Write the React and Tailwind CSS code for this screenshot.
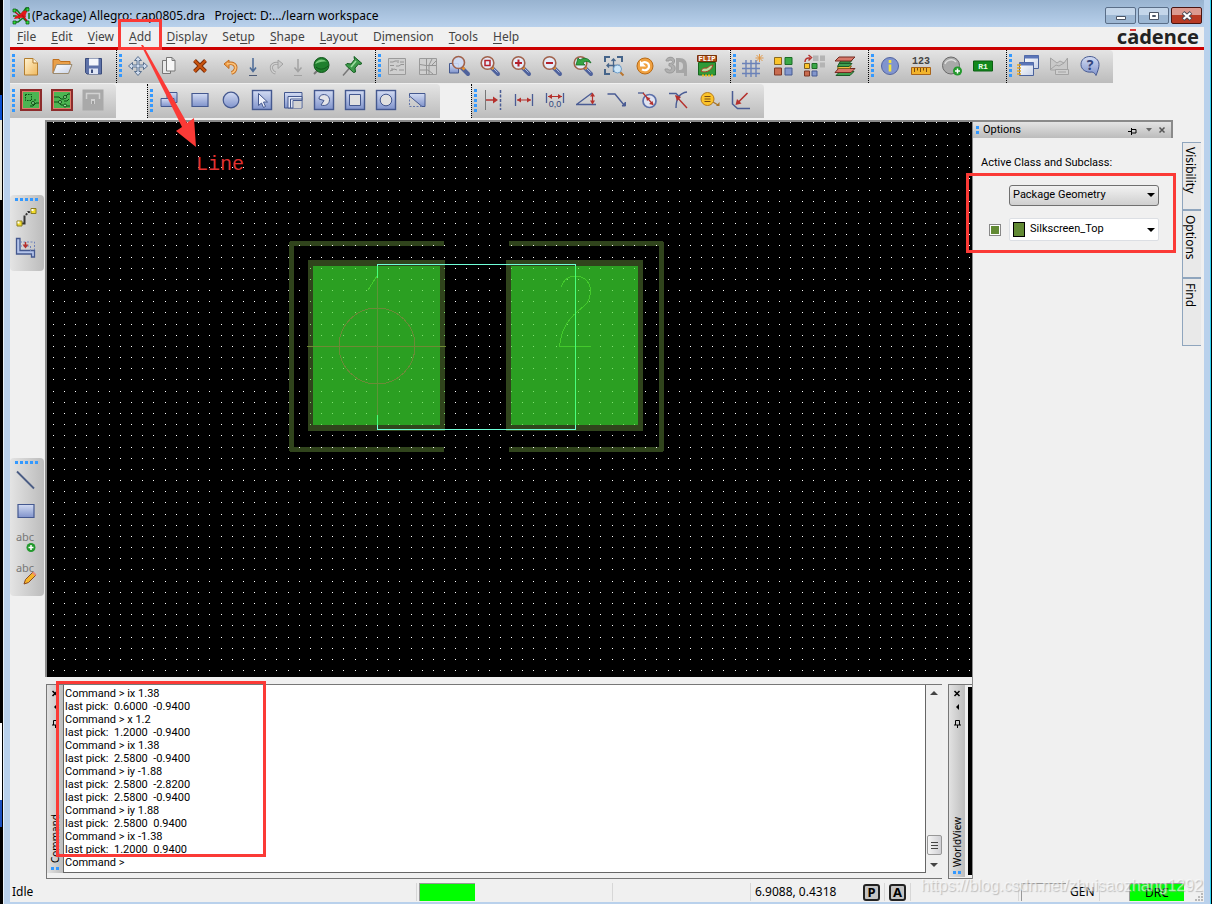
import { useState } from 'react';
import clsx from 'clsx';

const MENUS = [
  ['', 'F', 'ile'],
  ['', 'E', 'dit'],
  ['', 'V', 'iew'],
  ['', 'A', 'dd'],
  ['', 'D', 'isplay'],
  ['Set', 'u', 'p'],
  ['', 'S', 'hape'],
  ['', 'L', 'ayout'],
  ['D', 'i', 'mension'],
  ['', 'T', 'ools'],
  ['', 'H', 'elp'],
];

const LOG = [
  'Command > ix 1.38',
  'last pick:  0.6000  -0.9400',
  'Command > x 1.2',
  'last pick:  1.2000  -0.9400',
  'Command > ix 1.38',
  'last pick:  2.5800  -0.9400',
  'Command > iy -1.88',
  'last pick:  2.5800  -2.8200',
  'last pick:  2.5800  -0.9400',
  'Command > iy 1.88',
  'last pick:  2.5800  0.9400',
  'Command > ix -1.38',
  'last pick:  1.2000  0.9400',
];

// shared pieces of the toolbar icons
const lens = (
  <>
    <path d="M13 13l7 7" stroke="#4f629c" strokeWidth="4" strokeLinecap="round" />
    <path d="M14.500 13.500l5 5" stroke="#aebbe0" strokeWidth="1" />
    <path d="M13 12.500l2.500 2.500" stroke="#e8902c" strokeWidth="2.600" />
    <circle cx="9.500" cy="9" r="6.300" fill="#e6ebf8" stroke="#a0614a" strokeWidth="1.600" />
  </>
);

const frame = <rect x="2.500" y="2.500" width="19" height="19" fill="url(#blue)" stroke="#44588f" strokeWidth="1.400" />;

const ICONS = {
  new: (
    <>
      <path d="M5.500 4.500h8.500l4.500 4.500v12h-13z" fill="url(#cream)" stroke="#b27d2e" />
      <path d="M14 4.500v4.500h4.500" fill="#fff6df" stroke="#b27d2e" />
    </>
  ),
  open: (
    <>
      <path d="M3 19V5.500h6l1.500 2h9.500V11" fill="#e9a04a" stroke="#c06f1c" />
      <path d="M3 19.500l3.500-9h15.500l-3.500 9z" fill="url(#white)" stroke="#9a8a70" />
    </>
  ),
  save: (
    <>
      <path d="M4.500 4.500h16v15.500h-14.500l-1.500-1.500z" fill="#5e72a8" stroke="#3b4c7c" />
      <path d="M8 4.500h9.500v7H8z" fill="#f4f6fb" />
      <path d="M8 14.500h9v5.500H8z" fill="#dfe5f4" />
      <path d="M10 15.500h2v3.500h-2z" fill="#3b4c7c" />
    </>
  ),
  move: (
    <path
      d="M12 2.500l3.500 4h-2.500v4.500h4.500V8.500l4 3.500-4 3.500V13H13v4.500h2.500l-3.500 4-3.500-4H11V13H6.500v2.500l-4-3.500 4-3.500V11H11V6.500H8.500z"
      fill="#d4dff0"
      stroke="#4d6688"
      strokeWidth="0.900"
    />
  ),
  copy: (
    <>
      <path d="M5.500 6.500h8v13h-8z" fill="#e8e8e8" stroke="#777" />
      <path d="M9.500 3.500h5.500l3 3v10.500h-8.500z" fill="#f6f6f6" stroke="#777" />
      <path d="M15 3.500v3h3" fill="none" stroke="#777" />
    </>
  ),
  del: (
    <>
      <path d="M6.500 6.500l11 11M17.500 6.500l-11 11" stroke="#7a2c08" strokeWidth="4" />
      <path d="M6.500 6.500l11 11M17.500 6.500l-11 11" stroke="#c9540f" strokeWidth="2.200" />
    </>
  ),
  undo: (
    <>
      <path d="M8 10c6-2 9.500 1 8.500 5-.6 2-2 3.500-4 4" fill="none" stroke="#c06a1c" strokeWidth="3.500" />
      <path d="M10 6v8.500L5 10z" fill="#f0a14c" stroke="#c06a1c" />
      <path d="M8 10c6-2 9.500 1 8.500 5-.6 2-2 3.500-4 4" fill="none" stroke="#fbc27a" strokeWidth="1.800" />
    </>
  ),
  down: (
    <>
      <path d="M12 4v13M9 13.500l3 4 3-4" fill="none" stroke="#4b6a96" strokeWidth="1.500" />
      <path d="M8 21.500h8" stroke="#4b5a76" />
    </>
  ),
  redo: (
    <>
      <path d="M16 10c-6-2-9.500 1-8.500 5 .6 2 2 3.500 4 4" fill="none" stroke="#a2a2a2" strokeWidth="3" />
      <path d="M16 10c-6-2-9.500 1-8.500 5 .6 2 2 3.500 4 4" fill="none" stroke="#d0d0d0" strokeWidth="1.200" />
      <path d="M14 6v8.500L19 10z" fill="#c9c9c9" stroke="#a2a2a2" />
    </>
  ),
  downOff: (
    <>
      <path d="M12 5v12M8.500 13.500l3.500 4 3.500-4" fill="none" stroke="#a2a2a2" strokeWidth="1.500" />
      <path d="M8 21.500h8" stroke="#a2a2a2" />
    </>
  ),
  ball: (
    <>
      <path d="M5 20l4-4" stroke="#777" strokeWidth="2" />
      <circle cx="12.500" cy="11" r="7.500" fill="#1f7f2d" stroke="#0f5519" />
      <path d="M6 10c2-5 8-6 12-2-3-1-8 0-12 2z" fill="#7ac97d" />
      <path d="M7 13c3 3 8 3 12-1" fill="none" stroke="#0f5519" />
    </>
  ),
  pin: (
    <>
      <path d="M3 21.500l7-8" stroke="#777" strokeWidth="1.500" />
      <path d="M14 2.500l8 7-2 1-1.500-.5-3.500 4 .5 4-2 .5-8-7.500 1.500-1.500 4 .5 3.500-4.500z" fill="#3d9a4a" stroke="#115c1e" />
      <path d="M16 7l-5 6" stroke="#9edba0" strokeWidth="1.500" />
    </>
  ),
  ratsOff: (
    <>
      <path d="M3.500 4.500h17v16h-17z" fill="#cfcfcf" stroke="#9a9a9a" />
      <path d="M5 8h3l2-1h2M5 11.500h4M15 8h4M11 12h3l2-1.500h3M5 17l4-2 3 1M14 16h5M13 6v3M7 14v3" fill="none" stroke="#949494" />
    </>
  ),
  rats2Off: (
    <>
      <path d="M3.500 4.500h17v16h-17z" fill="#cfcfcf" stroke="#9a9a9a" />
      <path d="M10.500 5v15M16 5l-3 6v9M4 10.500l6 1h10M4 16h8l5 4M16 11l4-4" fill="none" stroke="#949494" />
    </>
  ),
  zoomWin: (
    <>
      <path d="M2.500 9.500h9v9.500h-9z" fill="url(#blue)" stroke="#44588f" />
      <path d="M15 14l6 6" stroke="#4f629c" strokeWidth="4" strokeLinecap="round" />
      <path d="M15 13l2.500 2.500" stroke="#e8902c" strokeWidth="2.600" />
      <circle cx="11.500" cy="8.500" r="6" fill="#cfdaf4" fillOpacity=".9" stroke="#a0614a" strokeWidth="1.600" />
    </>
  ),
  zoomFit: <>{lens}<path d="M7 6.500h5v5H7z" fill="none" stroke="#b5202c" strokeWidth="1.500" /></>,
  zoomIn: <>{lens}<path d="M9.500 5.500v7M6 9h7" stroke="#b5202c" strokeWidth="2" /></>,
  zoomOut: <>{lens}<path d="M6 9h7" stroke="#b5202c" strokeWidth="2" /></>,
  zoomPrev: (
    <>
      {lens}
      <path d="M5 11l2-7 2 2c4-3 9-2 11 3-3-2-6-2-8 0l2 2z" fill="#35a443" stroke="#146c22" strokeWidth=".8" />
    </>
  ),
  zoomCenter: (
    <>
      <path d="M3 8V3h5M15 3h5v5M3 15v5h5" fill="none" stroke="#45648a" strokeWidth="2" />
      <path d="M11.500 5v13M5 11.500h13M9.500 7l2-2 2 2M7 9.500l-2 2 2 2" fill="none" stroke="#45648a" strokeWidth="1.300" />
      <path d="M18 18l3.500 3.500" stroke="#b9752e" strokeWidth="2" />
      <circle cx="15.500" cy="15" r="4" fill="#cde6f8" stroke="#6c9cc8" />
    </>
  ),
  refresh: (
    <>
      <circle cx="12" cy="12" r="8" fill="#f0a140" stroke="#b86a16" />
      <path d="M8.500 9.500c3-2.500 7.500-1 7.500 2.800 0 3.500-4 5-7 3" fill="none" stroke="#fff" strokeWidth="2.200" />
      <path d="M7 6.500v6h6z" fill="#fff" />
    </>
  ),
  threeD: (
    <>
      <path d="M12 4h3c6 0 8 3 8 8v10h-3v-3h-8z" fill="#a6a6a6" />
      <path d="M2 7c0-5 9-5 8.500 0 0 2-1 3-2 3.500 4 1 4 9-3.500 8.500-3-.5-4-2-4-4h3c1 2 4 1 3.500-1S6 12 5 12V9.500c2 0 3.500-.5 3.500-2S5 5.500 5 7z" fill="#b0b0b0" stroke="#999" />
      <path d="M15 8v8c3 0 4-1 4-4s-1-4-4-4z" fill="#cdcdcd" />
    </>
  ),
  flip: (
    <>
      <path d="M2.500 1.500h19v6h-19z" fill="#b5541c" stroke="#7a3208" />
      <text x="12" y="7.200" fontSize="7" fontWeight="700" textAnchor="middle" fill="#fff" fontFamily="Liberation Mono, monospace">
        FLIP
      </text>
      <path d="M3.500 8.500h17v12.500h-17z" fill="#2f9a38" stroke="#17661f" />
      <path d="M6 17c3 2 10 1 12-6-4 0-5 4-8 3-2 0-3 1-4 3z" fill="#b8e0a0" stroke="#b03a26" />
      <path d="M7 21.500h11" stroke="#e8b820" strokeWidth="2" strokeDasharray="2 1" />
    </>
  ),
  grid: (
    <>
      <path d="M6 6v17M11 6v17M16 6v17M2 9.500h18M2 14.500h18M2 19.500h18" stroke="#6b82b8" strokeWidth="1.400" />
      <path d="M19.500 0v8M15.500 4h8M16.500 1l6 6M22.500 1l-6 6" stroke="#e0923a" strokeWidth=".9" />
    </>
  ),
  palette: (
    <>
      <path d="M3.500 3.500h7v7h-7z" fill="#fbc42a" stroke="#8a6a20" />
      <path d="M14 3.500h7v7h-7z" fill="#3aa946" stroke="#1c6b26" />
      <path d="M3.500 14h7v7h-7z" fill="#c96c50" stroke="#7c3624" />
      <path d="M14 14h7v7h-7z" fill="#8296cc" stroke="#475a92" />
    </>
  ),
  shadow: (
    <>
      <path d="M11 1.500h5.500v5.500H11zM18 1.500h5v5.500h-5zM18 8.500h5v5h-5z" fill="#b4b4b4" />
      <path d="M2.500 9.500h5v5h-5z" fill="#fbc42a" stroke="#7a5c20" />
      <path d="M10 9.500h5v5h-5z" fill="#3aa946" stroke="#1c6b26" />
      <path d="M2.500 17h5v5h-5z" fill="#c96c50" stroke="#7c3624" />
      <path d="M10 17h5v5h-5z" fill="#8296cc" stroke="#475a92" />
      <path d="M3 8c0-3 2-4.500 5-4M6.500 1l3 2.500-3 3" fill="none" stroke="#b5302c" strokeWidth="1.500" />
    </>
  ),
  layers: (
    <>
      <path d="M7 17.500h14l-4 4H3z" fill="#3fa050" stroke="#1c5a28" />
      <path d="M5.500 14.500h16.500l-4 4H2z" fill="#d8786a" stroke="#722a20" />
      <path d="M5.500 12h13l-2 2.500h-12z" fill="#f0c040" stroke="#86601a" />
      <path d="M6 9.500h13l-3 3H4.500z" fill="#3fa050" stroke="#1c5a28" />
      <path d="M8 6.500h11l-3 3H6z" fill="#2f8a40" stroke="#1c5a28" />
      <path d="M6 3h16l-4 4H2z" fill="#d8786a" stroke="#722a20" />
    </>
  ),
  info: (
    <>
      <circle cx="12" cy="12" r="8.500" fill="#8094cf" stroke="#5164a0" />
      <path d="M12 6v3M12 10.500v7" stroke="#f5e63c" strokeWidth="2.600" />
    </>
  ),
  ruler: (
    <>
      <text x="12" y="10" fontSize="10" fontWeight="700" textAnchor="middle" fill="#444" fontFamily="Liberation Mono, monospace">
        123
      </text>
      <path d="M2.500 13.500h19v7h-19z" fill="#f2b42c" stroke="#a8641a" />
      <path d="M5.500 14v4M8.500 14v2.500M11.500 14v4M14.500 14v2.500M17.500 14v4" stroke="#7a4a10" />
    </>
  ),
  datatip: (
    <>
      <circle cx="11" cy="11.500" r="8.500" fill="#a9a9a9" stroke="#6a6a6a" />
      <path d="M5 10c1-4 8-6 11-2" fill="none" stroke="#ddd" strokeWidth="1.500" />
      <circle cx="17.500" cy="17" r="4.500" fill="#23992d" />
      <path d="M17.500 14.500v5M15 17h5" stroke="#fff" strokeWidth="1.500" />
    </>
  ),
  r1: (
    <>
      <path d="M2.500 7h19v10h-19z" fill="#12891c" stroke="#0b5f12" />
      <text x="12" y="15" fontSize="8" fontWeight="700" textAnchor="middle" fill="#e7ffe7" fontFamily="Liberation Mono, monospace">
        R1
      </text>
    </>
  ),
  reports: (
    <>
      <path d="M8.500 1.500h14v13h-14z" fill="url(#white)" stroke="#4a629c" />
      <path d="M8.500 1.500h14v3h-14z" fill="#5b75b8" />
      <path d="M3.500 8.500h14v13h-14z" fill="url(#white)" stroke="#4a629c" />
      <path d="M3.500 8.500h14v3h-14z" fill="#5b75b8" />
      <path d="M1 11h4M1 14h4M1 17h4M1 20h4" stroke="#e3a51f" strokeWidth="1.500" />
    </>
  ),
  scriptOff: (
    <>
      <path d="M3.500 4v12h17V4l-3.500 5-4-2-3 2z" fill="#c9c9c9" stroke="#a3a3a3" />
      <path d="M4 15l5-4 3 1 5-3" fill="none" stroke="#a3a3a3" />
      <path d="M8.500 15.500h13v5h-13z" fill="#cfcfcf" stroke="#a3a3a3" />
      <path d="M11 18h8" stroke="#a3a3a3" />
    </>
  ),
  help: (
    <>
      <path d="M12 2.500c5 0 9 3.500 9 8 0 3-1 6-3 11-1-2-2-3-4-3.500-6 1-11-2.500-11-7.500s4-8 9-8z" fill="url(#blue)" stroke="#475a92" />
      <text x="12" y="15.500" fontSize="14" fontWeight="700" textAnchor="middle" fill="#33457c" fontFamily="Noto Sans, sans-serif">
        ?
      </text>
    </>
  ),
  board: (
    <>
      <rect x="2" y="2" width="20" height="20" fill="#4cb552" stroke="#8d2b2b" strokeWidth="2" />
      <rect x="3.500" y="3.500" width="17" height="17" stroke="#e07a6a" />
      <path d="M6.500 6.500h6v6h-6z" fill="none" stroke="#0c4f14" strokeDasharray="1.500 1" />
      <path d="M11 18h3l3-3h3M16 11v2" fill="none" stroke="#0c4f14" />
      <circle cx="14" cy="15" r="1.500" fill="#9fe09f" stroke="#0c4f14" />
    </>
  ),
  routes: (
    <>
      <rect x="2" y="2" width="20" height="20" fill="#4cb552" stroke="#8d2b2b" strokeWidth="2" />
      <rect x="3.500" y="3.500" width="17" height="17" stroke="#e07a6a" />
      <path d="M4 9h5l2 2h3M4 14h5l2 3h2M16 8l2-2h2M14 13h3l2-2M16 18h4" fill="none" stroke="#0c4f14" />
      <circle cx="15" cy="9" r="1.500" fill="#9fe09f" stroke="#0c4f14" />
      <circle cx="10" cy="14" r="1.500" fill="#9fe09f" stroke="#0c4f14" />
      <circle cx="15" cy="17.500" r="1.500" fill="#9fe09f" stroke="#0c4f14" />
    </>
  ),
  lockOff: (
    <>
      <path d="M1.500 1.500h21v21h-21z" fill="#a9a9a9" />
      <path d="M5.500 11V5.500h13V11" fill="none" stroke="#d2d2d2" strokeWidth="1.500" />
      <path d="M10 11h4v5h-4z" fill="#d2d2d2" />
      <path d="M12 13v3" stroke="#8a8a8a" strokeWidth="1.500" />
    </>
  ),
  shapeAdd: (
    <>
      <path d="M10 4.500h10v10h-10z" fill="url(#blue)" stroke="#44588f" />
      <path d="M4 10.500h13v8H4z" fill="url(#blue)" stroke="#44588f" />
    </>
  ),
  rect: <path d="M4 5.500h16v13H4z" fill="url(#blue)" stroke="#44588f" strokeWidth="1.200" />,
  circle: <circle cx="12" cy="12" r="7.800" fill="url(#blue)" stroke="#44588f" strokeWidth="1.200" />,
  select: <>{frame}<path d="M8.500 5.500v12l3-2.500 2 4.500 2-1-2-4.500h4z" fill="#f0f2fa" stroke="#44588f" /></>,
  lShape: (
    <>
      <path d="M3.500 4.500h17.500v15.500h-17.500z" fill="url(#blue)" stroke="#44588f" />
      <path d="M7 20V8.500h14v4h-9V20z" fill="#e4e9f6" stroke="#44588f" />
      <path d="M9.500 20v-9H21" stroke="#44588f" />
      <path d="M12.500 13h8v7h-8z" fill="#d2d2d2" />
    </>
  ),
  arcVoid: <>{frame}<path d="M7 11c0-6 10-6 10.500.5 0 5-4 7-8.500 5.500l3-4.500z" fill="#e4e4e8" stroke="#44588f" /></>,
  rectVoid: <>{frame}<path d="M6.500 6.500h11v11h-11z" fill="#e0e0e0" stroke="#44588f" /></>,
  circVoid: <>{frame}<circle cx="12" cy="12" r="5.800" fill="#e0e0e0" stroke="#44588f" /></>,
  island: (
    <>
      <path d="M4.500 5.500h15.500v13H17L4.500 8z" fill="url(#blue)" stroke="#44588f" />
      <path d="M4.500 8v10.500H17" fill="none" stroke="#6679ac" strokeDasharray="2 1.500" />
    </>
  ),
  dimDatum: (
    <>
      <path d="M4.500 2v20" stroke="#777" />
      <path d="M19.500 2v20" stroke="#4a5c94" strokeDasharray="3 1.500" strokeWidth="1.500" />
      <path d="M5 12h8" stroke="#b5302c" strokeWidth="1.500" />
      <path d="M12 8.500l5 3.500-5 3.500z" fill="#b5302c" />
    </>
  ),
  dimLinear: (
    <>
      <path d="M3.500 6v12M20.500 6v12" stroke="#4a5c94" strokeWidth="1.300" />
      <path d="M5 12h14" stroke="#b5302c" />
      <path d="M5 12l4-2.500v5zM19 12l-4-2.500v5z" fill="#b5302c" />
    </>
  ),
  dimOrd: (
    <>
      <path d="M3.500 5v10M20.500 5v10" stroke="#4a5c94" strokeWidth="1.300" />
      <path d="M5 8.500h14" stroke="#b5302c" />
      <path d="M5 8.500l4-2.500v5zM19 8.500L15 6v5z" fill="#b5302c" />
      <text x="12" y="19" fontSize="9" textAnchor="middle" fill="#33457c" fontFamily="Liberation Sans, sans-serif">
        0,0
      </text>
    </>
  ),
  dimAngle: (
    <>
      <path d="M2 16.500h20M2.500 16.500L18 5" fill="none" stroke="#4a5c94" strokeWidth="1.300" />
      <path d="M18.500 7v8" stroke="#b5302c" strokeWidth="1.200" />
      <path d="M16 8.500l2.500-4 2.500 4zM16 12.500l2.500 4 2.500-4z" fill="#b5302c" />
    </>
  ),
  leader: (
    <>
      <path d="M2.500 6H10l9 11" fill="none" stroke="#4a5c94" strokeWidth="1.400" />
      <path d="M17 18h3.500v-4z" fill="#4a5c94" stroke="#4a5c94" />
    </>
  ),
  dimDia: (
    <>
      <path d="M2 5h6" stroke="#4a5c94" strokeWidth="1.300" />
      <circle cx="13.500" cy="13" r="6.500" fill="#dfe4f2" stroke="#5c70aa" strokeWidth="1.700" />
      <path d="M7 5l10 11.500" stroke="#b5302c" strokeWidth="1.200" />
      <path d="M10 9l4.500 1-3.500 3zM17.500 17l-4.500-1 3.500-3z" fill="#b5302c" />
    </>
  ),
  dimRad: (
    <>
      <path d="M2 5.500h7l4 4M20 4c-7 1-11 6-11 16" fill="none" stroke="#4a5c94" strokeWidth="1.400" />
      <path d="M20 20L9 8" stroke="#b5302c" strokeWidth="1.400" />
      <path d="M8 7l6 2-4 4z" fill="#b5302c" />
    </>
  ),
  balloon: (
    <>
      <circle cx="9.500" cy="11" r="6.500" fill="#fbc42a" stroke="#b97a18" />
      <path d="M6.500 8.500h6M6.500 11h6M6.500 13.500h6" stroke="#7a4a10" />
      <path d="M15 14l5 3" stroke="#a8762a" strokeWidth="1.400" />
      <path d="M18 18h3.500v-4z" fill="#a8762a" />
    </>
  ),
  chamfer: (
    <>
      <path d="M3.500 3v13l5 4.500H21" fill="none" stroke="#4a5c94" strokeWidth="1.500" />
      <path d="M18.500 5L9 14.500" stroke="#b5302c" strokeWidth="1.600" />
      <path d="M6.500 17l1.500-6 4.500 4.500z" fill="#b5302c" />
    </>
  ),
  connect: (
    <>
      <path d="M6 18.500h4.500v-8" fill="none" stroke="#333" strokeWidth="2" />
      <path d="M12 10l2-3h4" fill="none" stroke="#333" strokeWidth="2" strokeDasharray="2 1.500" />
      <path d="M3 16h5v5H3zM17 3.500h5v5h-5z" fill="#f2dc2c" stroke="#8a7c20" />
      <path d="M3.500 16.500h2v2h-2zM17.500 4h2v2h-2z" fill="#fff" />
    </>
  ),
  slide: (
    <>
      <path d="M2.500 2.500h3.500v12h14.500v6.500h-3v-3H2.500z" fill="#b4c4ea" stroke="#44588f" strokeWidth="1.300" />
      <path d="M6 6h14.500v8M6 10h10.500v5" fill="none" stroke="#6f82ba" strokeDasharray="2 1.500" />
      <path d="M11.500 6v3" stroke="#b5302c" strokeWidth="1.500" />
      <path d="M8.500 8.500h6l-3 4z" fill="#b5302c" />
    </>
  ),
  line: <path d="M3 3.500l17 17" stroke="#4a5c84" strokeWidth="1.800" />,
  textAdd: (
    <>
      <text x="11" y="11" fontSize="11" textAnchor="middle" fill="#777" fontFamily="Noto Sans, sans-serif">
        abc
      </text>
      <circle cx="17" cy="17.500" r="4.500" fill="#23992d" />
      <path d="M17 15v5M14.500 17.500h5" stroke="#fff" strokeWidth="1.500" />
    </>
  ),
  textEdit: (
    <>
      <text x="11" y="11" fontSize="11" textAnchor="middle" fill="#777" fontFamily="Noto Sans, sans-serif">
        abc
      </text>
      <path d="M10 23l1.500-4.500 7.500-7.500 3 3-7.500 7.500z" fill="#f5b52a" stroke="#8a4a20" />
      <path d="M18 12l3 3 1.500-1.500-3-3z" fill="#e88a78" />
    </>
  ),
};

const ROW1 = [
  { w: 'w-[106px]', items: ['new', 'open', 'save'] },
  { w: 'w-[259px]', items: ['move', 'copy', 'del', 'undo', 'down', 'redo', 'downOff', 'ball', 'pin'] },
  {
    w: 'w-[355px]',
    items: ['ratsOff', 'rats2Off', 'zoomWin', 'zoomFit', 'zoomIn', 'zoomOut', 'zoomPrev', 'zoomCenter', 'refresh', 'threeD', 'flip'],
  },
  { w: 'w-[138px]', items: ['grid', 'palette', 'shadow', 'layers'] },
  { w: 'w-[138px]', items: ['info', 'ruler', 'datatip', 'r1'] },
  { w: 'w-[107px]', items: ['reports', 'scriptOff', 'help'] },
];

const ROW2 = [
  { w: 'w-[106px]', items: ['board', 'routes', 'lockOff'] },
  { w: 'w-[293px]', items: ['shapeAdd', 'rect', 'circle', 'select', 'lShape', 'arcVoid', 'rectVoid', 'circVoid', 'island'] },
  { w: 'w-[293px]', items: ['dimDatum', 'dimLinear', 'dimOrd', 'dimAngle', 'leader', 'dimDia', 'dimRad', 'balloon', 'chamfer'] },
];

const Grip = ({ vertical = true, count = 5 }) => (
  <span className={clsx('flex shrink-0 gap-[2px]', vertical && 'flex-col')}>
    {Array.from({ length: count }, (_, i) => (
      <span key={i} className="h-[3px] w-[3px] bg-[#3399ff]" />
    ))}
  </span>
);

const Tool = ({ name }) => (
  <button
    aria-label={name}
    className={clsx('flex h-[31px] shrink-0 items-center justify-center', name.startsWith('down') ? 'w-[14px]' : 'w-[31px]')}
  >
    <svg width="24" height="24" viewBox="0 0 24 24" fill="none" className="shrink-0">
      {ICONS[name]}
    </svg>
  </button>
);

const ToolGroup = ({ w, items, first }) => (
  <div
    className={clsx(
      'flex shrink-0 items-center rounded-tr bg-linear-to-b from-[#e4e4e4] to-[#bcbcbc] pb-[2px] pl-[2px]',
      w,
      !first && 'border-l border-dotted border-black'
    )}
  >
    <Grip />
    {items.map((name) => (
      <Tool key={name} name={name} />
    ))}
  </div>
);

const SideTools = ({ items }) => (
  <div className="flex w-[34px] flex-col items-center rounded bg-linear-to-r from-[#e4e4e4] to-[#bcbcbc] pt-[3px] pr-[2px] pb-2">
    <Grip vertical={false} />
    {items.map((name) => (
      <Tool key={name} name={name} />
    ))}
  </div>
);

const DockBar = ({ title }) => (
  <div className="flex w-4 shrink-0 flex-col items-center bg-linear-to-r from-[#e2e2e2] to-[#bdbdbd] pt-[5px] pb-[3px]">
    <svg width="9" height="38" viewBox="0 0 9 38" fill="none" stroke="#000">
      <path d="M1.500 1l5 5M6.500 1l-5 5" strokeWidth="1.500" />
      <path d="M6 14v6l-3-3z" fill="#000" stroke="none" />
      <path d="M2.500 35V30.500h4V35M1 35h7M4.500 35v3" />
    </svg>
    <span className="mt-auto rotate-180 text-[10px] leading-4 [writing-mode:vertical-rl]">{title}</span>
    <span className="mt-1">
      <Grip vertical={false} count={2} />
    </span>
  </div>
);

// grid points, spaced 11.175px from the window corner
const DOTS = (() => {
  let d = '';
  for (let i = 0; i < 180; i++) {
    for (let j = 0; j < 120; j++) {
      d += `M${Math.round(52.9 + i * 11.175)} ${Math.round(122.46 + j * 11.175)}h1v1h-1z`;
    }
  }
  return d;
})();

const Drawing = () => (
  <svg className="absolute inset-0 h-full w-full" shapeRendering="crispEdges" fill="none">
    <clipPath id="pads">
      <path d="M308 260h137v171H308zM506 260h137v171H506z" />
    </clipPath>
    <g transform="translate(-47 -122)">
      <g stroke="#30441c" strokeWidth="5" strokeLinejoin="round">
        <path d="M443.500 243.500H291.500V449.500H443.500" />
        <path d="M508.500 243.500H661.500V449.500H508.500" />
      </g>
      <path d={DOTS} fill="#fff" />
      <path d="M308 260h137v171H308zM506 260h137v171H506z" fill="#30441c" />
      <path d="M313 266h127v159H313zM511 266h127v159H511z" fill="#2b9f22" />
      <path d={DOTS} fill="#7fe070" clipPath="url(#pads)" />
      <circle cx="377" cy="346" r="38" stroke="#6b8a38" />
      <path d="M307 346.500h139" stroke="#6f8a35" />
      <path d="M377.500 276v140" stroke="#5f9438" />
      <path d="M377 276l-9 14" stroke="#44c92c" />
      <path
        d="M561.500 287C563 280 569 276 575 276c10 0 16 7 15.500 16-.5 11-5.500 13-12.500 19-13 11-17 22-18.500 35.500h31.500"
        stroke="#44c92c"
      />
      <path d="M377.500 278V264.500H575.500V429.500H377.500V415" stroke="#6fffd8" />
      <path d="M575.500 266v159M377.500 266v12M377.500 415v10" stroke="#48ff7c" />
    </g>
  </svg>
);

const MenuBar = () => (
  <nav className="flex h-5 items-center gap-[15px] bg-[#f0f0f0] pr-[5px] pl-[7px] text-xs text-[#444]">
    {MENUS.map(([pre, key, post]) => (
      <button key={pre + key + post} className="relative leading-5">
        {pre}
        <span className="underline underline-offset-2">{key}</span>
        {post}
        {post === 'dd' && (
          <>
            <span className="absolute -inset-x-[11px] -top-[8px] -bottom-[3px] z-10 border-[3px] border-[#fb3a36]" />
            <svg className="absolute top-[18px] left-[12px] z-20" width="60" height="104" viewBox="0 0 60 104">
              <path d="M0 0h2l44 78 7-5 2 29-20-16 6-4z" fill="#fb3a36" />
            </svg>
            <span className="absolute top-[126px] left-[67px] z-20 font-['Liberation_Mono',monospace] text-xl leading-6 text-[#e23232]">
              Line
            </span>
          </>
        )}
      </button>
    ))}
    <span className="ml-auto flex text-[20px] leading-[18px] font-bold text-[#222]">
      c
      <span className="relative">
        a
        <span className="absolute inset-x-[3px] top-px h-[2px] bg-[#e03a3a]" />
      </span>
      dence
    </span>
  </nav>
);

const OptionsPanel = () => {
  const [cls, setCls] = useState('Package Geometry');
  const [sub, setSub] = useState('Silkscreen_Top');

  return (
    <section className="w-[200px] shrink-0 font-['Roboto',sans-serif] text-[11px]">
      <header className="flex h-[18px] items-center border-t-2 border-r-2 border-[#8a8a8a] bg-linear-to-b from-[#e4e4e4] to-[#bcbcbc] pr-1 pl-[3px]">
        <Grip count={2} />
        <span className="ml-1 flex-1 leading-4">Options</span>
        <svg width="40" height="12" viewBox="0 0 40 12" fill="none" stroke="#000">
          <path d="M1 7.500h3M4.500 4v7M4.500 5.500h4.500v3.500H4.500" />
          <path d="M19 4h6l-3 3.500z" fill="#666" stroke="none" />
          <path d="M32.500 3.500l5 5M37.500 3.500l-5 5" stroke="#555" strokeWidth="1.500" />
        </svg>
      </header>
      <p className="mt-[17px] pl-2 leading-4">Active Class and Subclass:</p>
      <div className="relative mt-[14px] flex flex-col gap-3 pr-[14px] pl-4">
        <div className="relative ml-5">
          <select
            aria-label="Active class"
            value={cls}
            onChange={(e) => setCls(e.target.value)}
            className="block h-[21px] w-full appearance-none rounded-[3px] border border-[#707070] bg-linear-to-b from-[#f2f2f2] to-[#cfcfcf] pl-[3px]"
          >
            <option>Package Geometry</option>
          </select>
          <svg className="pointer-events-none absolute top-2 right-1" width="8" height="5">
            <path d="M0 0h8L4 4z" />
          </svg>
        </div>
        <div className="flex items-center">
          <button aria-label="Subclass visible" className="mr-2 h-3 w-3 border border-[#888] bg-[#628a34] outline-1 -outline-offset-2 outline-white" />
          <div className="relative flex-1">
            <select
              aria-label="Active subclass"
              value={sub}
              onChange={(e) => setSub(e.target.value)}
              className="block h-[23px] w-full appearance-none rounded-xs border border-[#dcdfe4] bg-white pl-5"
            >
              <option>Silkscreen_Top</option>
            </select>
            <span className="pointer-events-none absolute top-1 left-1 h-[15px] w-[12px] border border-black bg-[#628a34]" />
            <svg className="pointer-events-none absolute top-[10px] right-1" width="8" height="5">
              <path d="M0 0h8L4 4z" />
            </svg>
          </div>
        </div>
        <span className="pointer-events-none absolute -top-3 -right-[3px] -bottom-3 -left-[7px] z-10 border-[3px] border-[#fb3a36]" />
      </div>
    </section>
  );
};

const CommandDock = () => {
  const [cmd, setCmd] = useState('');

  return (
    <section className="flex min-w-0 flex-1 border-t border-b border-l border-[#777] pb-[5px]">
      <DockBar title="Command" />
      <div className="relative min-w-0 flex-1 border-r border-b border-l border-[#666] bg-white pt-[2px] pl-px font-['Roboto',sans-serif] text-[11px]">
        {LOG.map((line, i) => (
          <p key={i} className="leading-[13px] whitespace-pre">
            {line}
          </p>
        ))}
        <label className="flex leading-[13px]">
          <span>Command &gt;</span>
          <input value={cmd} onChange={(e) => setCmd(e.target.value)} className="ml-1 h-[13px] flex-1 outline-none" />
        </label>
        <span className="pointer-events-none absolute -top-1 -left-2 h-[176px] w-[210px] border-[3px] border-[#fb3a36]" />
      </div>
      <div className="flex w-4 flex-col items-center bg-[#efefef] py-1">
        <svg width="8" height="8">
          <path d="M0 6h8L4 2z" fill="#444" />
        </svg>
        <button
          aria-label="Scroll"
          className="mt-auto mb-[6px] flex h-5 w-[15px] flex-col items-center justify-center gap-[2px] rounded-xs border border-[#979797] bg-linear-to-r from-[#f4f4f4] to-[#d0d0d4]"
        >
          <span className="h-px w-[7px] bg-[#444]" />
          <span className="h-px w-[7px] bg-[#444]" />
          <span className="h-px w-[7px] bg-[#444]" />
        </button>
        <svg width="8" height="8">
          <path d="M0 2h8L4 6z" fill="#444" />
        </svg>
      </div>
    </section>
  );
};

const keycap =
  'h-[17px] w-[17px] rounded-[3px] border-2 border-[#222] bg-[#c4c4c4] text-center text-[13px] leading-[13px] font-bold';

const StatusBar = () => (
  <footer className="relative flex h-5 items-center bg-[#f0f0f0] text-xs">
    <span className="flex-1 pl-[2px]">Idle</span>
    <span className="h-[18px] w-px bg-[#d7d7d7]" />
    <span className="ml-[2px] h-[18px] w-[56px] border-t border-l border-[#999] bg-[#00ff00]" />
    <span className="ml-[137px] h-[18px] w-px bg-[#d7d7d7]" />
    <span className="ml-[137px] h-[18px] w-px bg-[#d7d7d7]" />
    <span className="w-[112px] pl-1">6.9088, 0.4318</span>
    <button className={keycap}>P</button>
    <span className="mx-1 h-[18px] w-px bg-[#d7d7d7]" />
    <button className={keycap}>A</button>
    <span className="ml-1 h-[18px] w-px bg-[#d7d7d7]" />
    <span className="ml-[107px] h-[18px] w-px bg-[#d7d7d7]" />
    <span className="ml-[2px] h-[18px] w-[45px] border-t border-l border-[#999]" />
    <span className="w-[33px] pl-1">GEN</span>
    <span className="mr-[29px] h-[18px] w-px bg-[#d7d7d7]" />
    <span className="h-[18px] w-[55px] border-t border-l border-[#999] bg-[#00ff00] text-center leading-[18px]">DRC</span>
    <svg className="mr-px ml-[11px] self-end" width="8" height="10">
      <path d="M6 1h2v2H6zM3 4h2v2H3zM6 4h2v2H6zM0 7h2v2H0zM3 7h2v2H3zM6 7h2v2H6z" fill="#b8b8b8" />
    </svg>
    <span className="pointer-events-none absolute right-px bottom-[6px] font-['Liberation_Sans',sans-serif] text-base leading-5 whitespace-nowrap text-white/60 [text-shadow:1px_1px_1px_#9999]">
      https://blog.csdn.net/zhuisaozhang1292
    </span>
  </footer>
);

const capBtn = 'flex h-[17px] w-[31px] items-center justify-center rounded-xs border';

const TitleBar = () => (
  <header className="flex h-[27px] items-center bg-linear-to-b from-[#98b3d0] to-[#b9d1ec] pl-[2px] text-xs text-black">
    <svg width="18" height="18" viewBox="0 0 18 18" fill="none" className="mt-1">
      <path d="M1 3h4l4 5 5-7h3M1 9h3l4 3M1 15h5l5-4 5 5M17 6v6" stroke="#0f7a18" strokeWidth="1.500" />
      <path d="M2 12c2-5 6-3 8-7 2-2 4-1 6-3-1 4-3 5-2 8-2 2-4 0-6 1-2 0-3 1-6 1z" fill="#e01818" />
      <path d="M3 5l5 4M10 8l5 6" stroke="#c01010" strokeWidth="1.500" />
      <path d="M1 2h3v3H1zM14 1h3v3h-3zM1 14h3v3H1zM14 14h3v3h-3z" fill="#2ee03a" stroke="#0a4a10" strokeWidth=".7" />
    </svg>
    <h1 className="ml-[2px] pt-1 whitespace-pre">(Package) Allegro: cap0805.dra   Project: D:.../learn workspace</h1>
    <div className="mt-1 mr-[2px] ml-auto flex gap-[2px]">
      <button aria-label="Minimize" className={clsx(capBtn, 'border-[#5a6e88] bg-linear-to-b from-[#c4d6ea] from-50% to-[#9db7d3] to-50%')}>
        <svg width="12" height="12">
          <path d="M1.500 6.500h9v3h-9z" fill="#fff" stroke="#4a5566" />
        </svg>
      </button>
      <button aria-label="Maximize" className={clsx(capBtn, 'border-[#5a6e88] bg-linear-to-b from-[#c4d6ea] from-50% to-[#9db7d3] to-50%')}>
        <svg width="12" height="12">
          <path d="M1.500 2.500h9v7h-9z" fill="#fff" stroke="#4a5566" />
          <path d="M4.500 5.500h3v1h-3z" fill="#fff" stroke="#4a5566" />
        </svg>
      </button>
      <button aria-label="Close" className={clsx(capBtn, 'border-[#4a1410] bg-linear-to-b from-[#dc9a90] from-50% to-[#b83a24] to-50%')}>
        <svg width="12" height="12">
          <path d="M2 2.500l8 7M10 2.500l-8 7" stroke="#4a4a55" strokeWidth="4" />
          <path d="M2.500 3l7 6M9.500 3l-7 6" stroke="#fff" strokeWidth="2.200" />
        </svg>
      </button>
    </div>
  </header>
);

export default function App() {
  return (
    <div className="flex min-h-screen bg-black font-['Noto_Sans',sans-serif] text-black">
      <svg className="absolute h-0 w-0">
        <linearGradient id="blue" x1="0" y1="0" x2="0" y2="1">
          <stop offset="0" stopColor="#d3dcf3" />
          <stop offset="1" stopColor="#8093cb" />
        </linearGradient>
        <linearGradient id="cream" x1="0" y1="0" x2="1" y2="1">
          <stop offset="0" stopColor="#fff3d2" />
          <stop offset="1" stopColor="#f0b95e" />
        </linearGradient>
        <linearGradient id="white" x1="0" y1="0" x2="1" y2="1">
          <stop offset="0" stopColor="#fff" />
          <stop offset="1" stopColor="#c9d3e8" />
        </linearGradient>
      </svg>

      {/* sliver of the window behind */}
      <div className="flex w-[3px] flex-col pr-px">
        <div className="mt-[95px] h-[25px] bg-[#0a4fd0]" />
        <div className="h-20 bg-[#e9e8da]" />
        <div className="mt-auto h-[77px] bg-white" />
        <div className="mb-[77px] h-[27px] bg-[#1c50c0]" />
      </div>

      <div className="flex min-w-0 flex-1 flex-col border-r border-l border-r-[#2fd0ee] border-l-[#e8f2fb] bg-[#b9d1ec] px-[6px] pb-[2px]">
        <TitleBar />
        <MenuBar />
        <div className="h-[3px] bg-[#cc0000]" />

        <div className="flex flex-1 flex-col bg-[#f0f0f0]">
          <div className="flex h-[33px]">
            {ROW1.map((g, i) => (
              <ToolGroup key={i} {...g} first={i === 0} />
            ))}
          </div>
          <div className="mt-px mb-[2px] flex h-[34px] gap-[31px]">
            {ROW2.map((g, i) => (
              <ToolGroup key={i} {...g} first={i === 0} />
            ))}
          </div>

          <main className="flex min-h-0 flex-1">
            <aside className="flex w-[35px] shrink-0 flex-col gap-[187px] pt-[75px]">
              <SideTools items={['connect', 'slide']} />
              <SideTools items={['line', 'rect', 'textAdd', 'textEdit']} />
            </aside>

            <div className="flex min-w-0 flex-1 flex-col pb-[3px]">
              <div className="relative flex-1 overflow-hidden border-t-2 border-l-2 border-[#8a8a8a] bg-black">
                <Drawing />
              </div>
              <div className="mt-[7px] flex h-[195px] gap-[6px] pl-px">
                <CommandDock />
                <section className="flex w-[24px] border-t border-b border-l border-[#777] pb-px">
                  <DockBar title="WorldView" />
                  <div className="my-[2px] ml-[3px] flex-1 bg-black" />
                </section>
              </div>
            </div>

            <div className="mb-[3px] flex border-l border-[#8a8a8a]">
              <OptionsPanel />
              <div className="mt-[22px] mr-[3px] ml-[9px] flex w-[19px] flex-col text-xs">
                {['Visibility', 'Options', 'Find'].map((tab) => (
                  <button
                    key={tab}
                    className="h-[68px] border-t border-b border-l border-[#8fa5bd] bg-[#e9e9e9] pt-1 text-left leading-[21px] [writing-mode:vertical-rl]"
                  >
                    {tab}
                  </button>
                ))}
              </div>
            </div>
          </main>

          <StatusBar />
        </div>
      </div>
      <div className="w-px bg-black" />
    </div>
  );
}
